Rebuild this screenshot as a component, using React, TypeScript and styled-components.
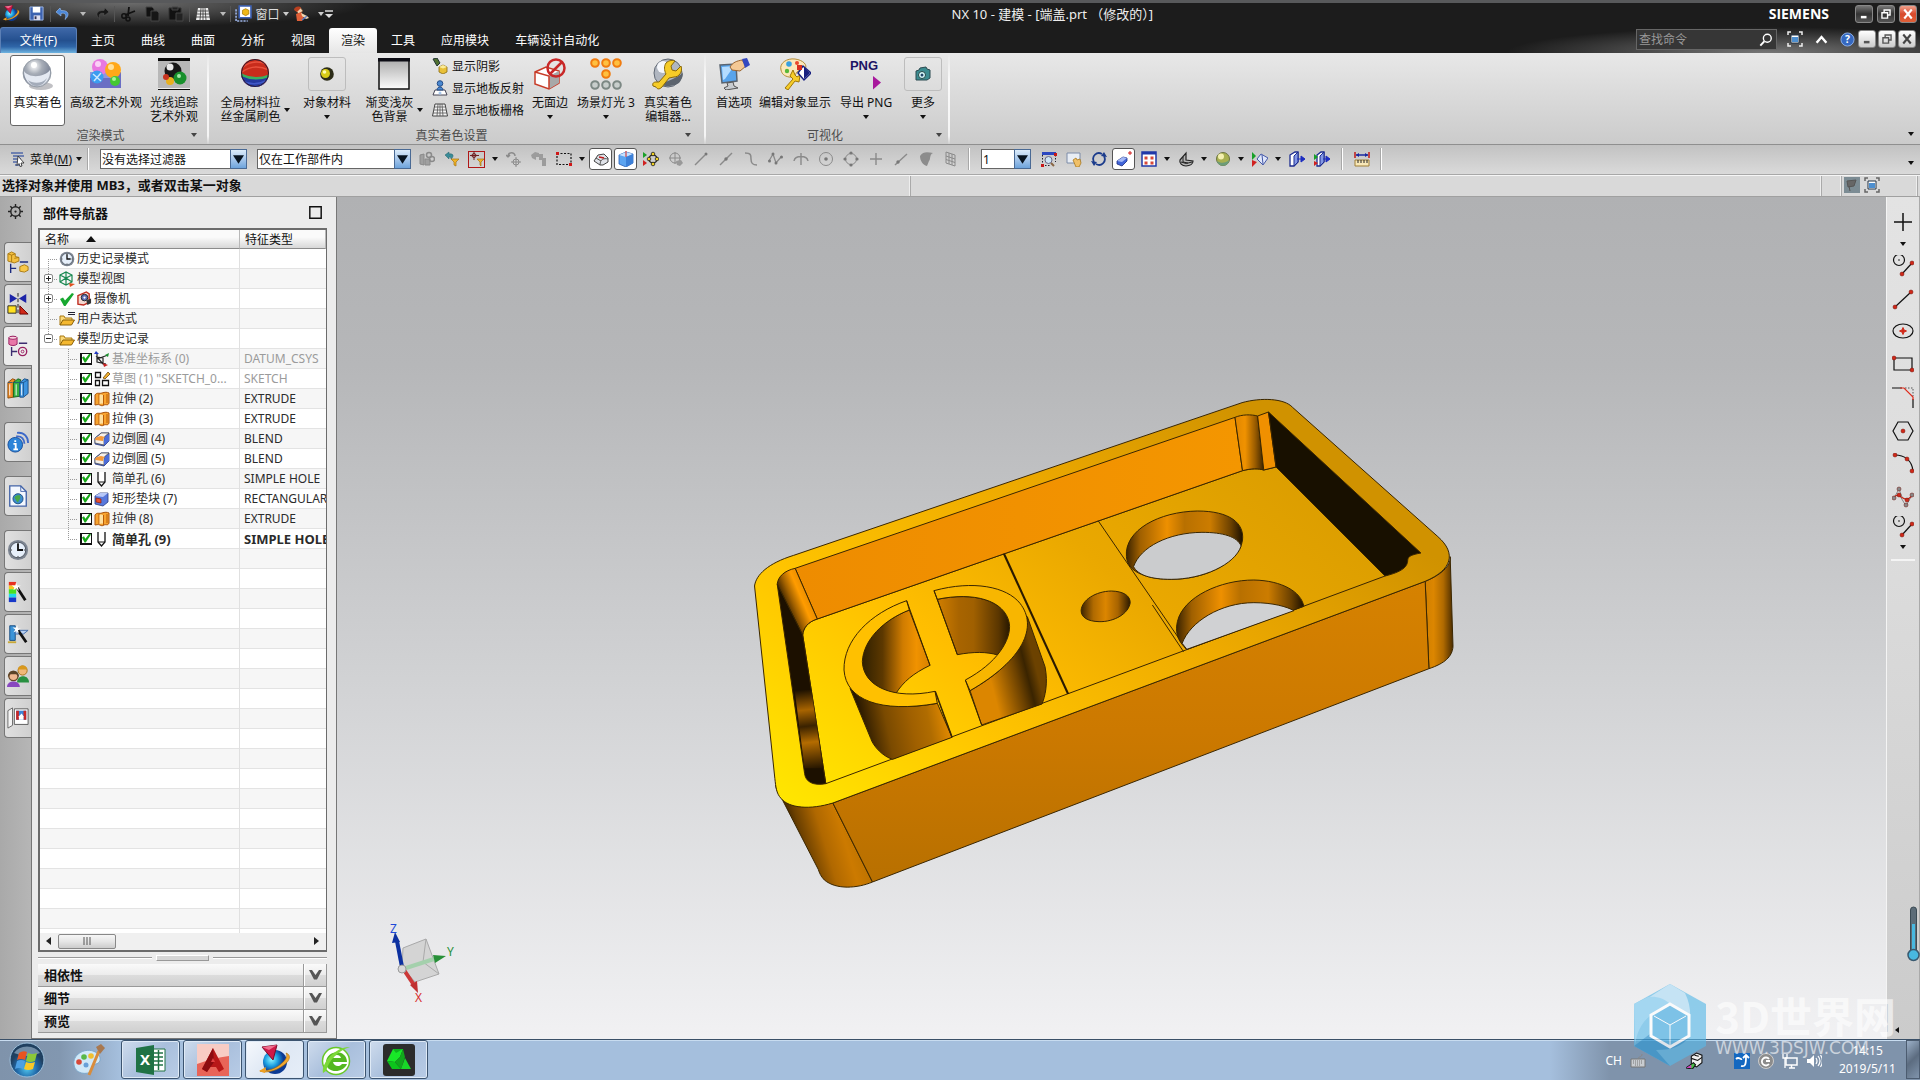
import React from "react";
import styled, { createGlobalStyle, css } from "styled-components";

const GlobalStyle = createGlobalStyle`
  *, *::before, *::after { box-sizing: border-box; }
  body { margin: 0; }
  body, button, input, select, table {
    font-family: "Noto Sans", "Noto Sans CJK SC", sans-serif;
    font-size: 12px;
  }
  button { padding: 0; border: 0; background: none; color: inherit; }
  svg { display: block; flex: none; }
`;

const Page = styled.div`
  position: relative;
  display: flex;
  flex-direction: column;
  height: 100vh;
  min-height: 800px;
  overflow: hidden;
  color: #111;
`;

/* ---------- shared ---------- */

type IconProps = { w?: number; h?: number; vb?: string; children: React.ReactNode };
const Icon = ({ w = 16, h = w, vb = "0 0 16 16", children }: IconProps) => (
  <svg width={w} height={h} viewBox={vb} aria-hidden="true" fill="none">
    {children}
  </svg>
);
const Caret = ({ color = "#111" }: { color?: string }) => (
  <svg width="6" height="4" viewBox="0 0 6 4" aria-hidden="true">
    <path d="M0 0h6L3 4z" fill={color} />
  </svg>
);

/* ---------- header ---------- */

const Header = styled.header`
  flex: none;
  border-top: 3px solid #58595b;
  background:
    radial-gradient(ellipse 260px 26px at 92% 100%, #777 0%, rgba(119, 119, 119, 0) 100%),
    radial-gradient(ellipse 240px 24px at 130px 0, #6b6b6b 0%, rgba(107, 107, 107, 0) 100%),
    #1c1c1c;
  color: #eee;
`;
const TitleRow = styled.div`
  display: flex;
  align-items: center;
  height: 21px;
  padding-right: 3px;
`;
const QuickBar = styled.div`
  display: flex;
  align-items: center;
  width: 336px;
`;
const QuickButton = styled.button<{ $w: number }>`
  display: flex;
  align-items: center;
  justify-content: center;
  gap: 3px;
  width: ${(p) => p.$w}px;
  height: 20px;
  color: #ddd;
`;
const QuickRule = styled.span`
  width: 1px;
  height: 16px;
  background: #555;
`;
const WindowTitle = styled.h1`
  flex: 1;
  margin: 0;
  font-size: 13px;
  font-weight: 400;
  line-height: 20px;
  text-align: center;
`;
const Brand = styled.span`
  font: bold 14px/20px "Open Sans", sans-serif;
  color: #fff;
  margin-right: 26px;
`;
const WindowButtons = styled.div`
  display: flex;
  align-items: center;
  gap: 4px;
`;
const WindowButton = styled.button<{ $tone: "dark" | "red" | "light" }>`
  display: flex;
  align-items: center;
  justify-content: center;
  width: 18px;
  height: 18px;
  border: 1px solid #888;
  border-radius: 3px;
  background: ${(p) =>
    p.$tone === "red"
      ? "linear-gradient(#f0a08c, #d84a2c 50%, #e06038)"
      : p.$tone === "light"
        ? "linear-gradient(#fff, #ccc)"
        : "linear-gradient(#777, #333 50%, #555)"};
`;
const TabRow = styled.div`
  display: flex;
  align-items: flex-end;
  height: 29px;
  padding-right: 4px;
`;
const FileTab = styled.button`
  width: 77px;
  height: 26px;
  padding-bottom: 2px;
  border-radius: 3px 3px 0 0;
  background: linear-gradient(#3f68a8, #24508f 50%, #2f66a8 75%, #6fb4e0);
  border: 1px solid #5b7fb5;
  border-bottom: 0;
  color: #fff;
  margin-right: 1px;
`;
const Tab = styled.button<{ $active?: boolean }>`
  height: 25px;
  padding: 0 12px 2px;
  margin: 0 1px;
  border-radius: 3px 3px 0 0;
  color: #fff;
  ${(p) =>
    p.$active &&
    css`
      background: linear-gradient(#fff, #e6e6e6);
      color: #111;
    `}
`;
const Grow = styled.span`
  flex: 1;
`;
const SearchBox = styled.label`
  display: flex;
  align-items: center;
  width: 141px;
  height: 21px;
  margin: 0 9px 3px 0;
  padding-right: 3px;
  border: 1px solid #666;
  background: #363636;
`;
const SearchInput = styled.input`
  flex: 1;
  min-width: 0;
  padding: 0 2px;
  border: 0;
  outline: 0;
  background: none;
  color: #aaa;
  &::placeholder { color: #999; opacity: 1; }
`;
const HeaderTools = styled.div`
  display: flex;
  align-items: center;
  height: 24px;
  gap: 2px;
  margin-bottom: 2px;
`;

const Restore = ({ c }: { c: string }) => (
  <Icon w={10}>
    <path d="M5 5V1.500h9.500v8H11M1.500 6h9v8.500h-9z" stroke={c} strokeWidth="2.200" />
  </Icon>
);
const Minimize = ({ c }: { c: string }) => (
  <Icon w={10}><path d="M3 13h9" stroke={c} strokeWidth="4" /></Icon>
);
const Close = ({ c }: { c: string }) => (
  <Icon w={12}><path d="M3 2l10 12M13 2L3 14" stroke={c} strokeWidth="2.800" /></Icon>
);
const FullScreen = ({ w = 16, c = "#eee" }: { w?: number; c?: string }) => (
  <Icon w={w}>
    <path d="M1 4V1h3M12 1h3v3M15 12v3h-3M4 15H1v-3" stroke={c} strokeWidth="1.500" />
    <path d="M4 4h8v8H4z" fill="#fff" stroke="#234" />
    <path d="M5 6h6v5H5z" fill="#4d8fd0" />
  </Icon>
);
const NxLogo = ({ w = 17 }: { w?: number }) => (
  <Icon w={w} vb="0 0 32 32">
    <defs>
      <radialGradient id="nxBall" cx=".35" cy=".4"><stop offset="0" stopColor="#8ff4ff" /><stop offset=".55" stopColor="#1b9ee0" /><stop offset="1" stopColor="#0b3a94" /></radialGradient>
    </defs>
    <circle cx="16" cy="18" r="12" fill="url(#nxBall)" />
    <path d="M27 9c6 2 4 9-5 14-8 5-17 6-21 4 8 0 15-2 21-7 5-4 7-8 5-11z" fill="#f0a830" stroke="#a86a08" strokeWidth=".6" />
    <path d="M0 27l7-4-1 6z" fill="#f0a020" />
    <path d="M3 3l15-2-4 15z" fill="#d01848" stroke="#7b0a28" />
    <path d="M3 3l15-2-8 5z" fill="#f07090" />
  </Icon>
);

const TitleBar = () => (
  <TitleRow>
    <QuickBar>
      <QuickButton $w={23} aria-label="NX"><NxLogo /></QuickButton>
      <QuickButton $w={27} aria-label="保存">
        <Icon w={15}>
          <path d="M1 1h14v14H1z" fill="#3c62b0" stroke="#9db6e4" />
          <path d="M4 1h8v6H4z" fill="#fff" /><path d="M5 10h7v5H5z" fill="#dde" /><path d="M6 11h2v3H6z" fill="#335" />
        </Icon>
      </QuickButton>
      <QuickRule />
      <QuickButton $w={38} aria-label="撤消">
        <Icon><path d="M5 2L1 6l5 4V7.500c4-1 6 1 4 6 5-4 4-9.500-4-9z" fill="#4b87d8" stroke="#9cc0f0" strokeWidth=".6" /></Icon>
        <Icon w={3}><g /></Icon>
        <Caret color="#bbb" />
      </QuickButton>
      <QuickButton $w={25} aria-label="重做">
        <Icon><path d="M11 2l4 4-5 4V7.500c-4-1-6 1-4 6-5-4-4-9.500 4-9z" fill="#181818" stroke="#555" strokeWidth=".6" /></Icon>
      </QuickButton>
      <QuickRule />
      <QuickButton $w={26} aria-label="剪切">
        <Icon><path d="M15 5L5 9M9 1l-1 9" stroke="#111" strokeWidth="1.800" /><circle cx="4" cy="10" r="2.200" stroke="#111" strokeWidth="1.500" /><circle cx="8" cy="13" r="2" stroke="#111" strokeWidth="1.500" /></Icon>
      </QuickButton>
      <QuickButton $w={22} aria-label="复制">
        <Icon><path d="M2 1h6l2 2v8H2z" fill="#111" stroke="#444" /><path d="M7 5h6l2 2v8H7z" fill="#161616" stroke="#444" /></Icon>
      </QuickButton>
      <QuickButton $w={26} aria-label="粘贴">
        <Icon><path d="M1 2h12v12H1z" fill="#111" stroke="#333" /><path d="M4 1h6v3H4zM8 7h7v8H8z" fill="#222" stroke="#444" /></Icon>
      </QuickButton>
      <QuickRule />
      <QuickButton $w={40} aria-label="栅格">
        <Icon><path d="M3 2h10l2 12H1z" fill="#eee" /><path d="M2.500 5h11M2 8h12M1 11h14M6 2l-1 12M8 2v12M10 2l1 12" stroke="#333" strokeWidth=".8" /></Icon>
        <Icon w={3}><g /></Icon>
        <Caret color="#bbb" />
      </QuickButton>
      <QuickRule />
      <QuickButton $w={62}>
        <Icon w={17}>
          <path d="M4 1h11v11H4z" fill="#fff" stroke="#3d62b8" strokeWidth="1.500" />
          <path d="M1 4v11h11" stroke="#9cb4e8" strokeWidth="1.500" strokeDasharray="2 1" />
          <path d="M7 5l3-1.500L13 5v3.500L10 10 7 8.500z" fill="#f0b818" stroke="#a87800" strokeWidth=".7" />
        </Icon>
        窗口
        <Caret color="#ccc" />
      </QuickButton>
      <QuickButton $w={30} aria-label="角色">
        <Icon><path d="M2 4l5-3 3 4-4 3z" fill="#f0d0b0" stroke="#704018" strokeWidth=".6" /><path d="M1 4c0-3 5-5 7-2L4 6z" fill="#b84020" /><path d="M3 8l5-2 3 4-2 5H4z" fill="#e06038" /><path d="M8 7l6 3 2 2-3 1-4-3z" fill="#f0d8b0" /><path d="M9 14l5-4" stroke="#6080c8" strokeWidth="1.500" /></Icon>
        <Icon w={3}><g /></Icon>
        <Caret color="#ccc" />
      </QuickButton>
      <QuickButton $w={12} aria-label="自定义">
        <Icon w={8} vb="0 0 8 8"><path d="M0 1h8" stroke="#ddd" strokeWidth="1.500" /><path d="M0 4h8L4 8z" fill="#ddd" /></Icon>
      </QuickButton>
    </QuickBar>
    <WindowTitle>NX 10 - 建模 - [端盖.prt （修改的）]</WindowTitle>
    <Brand>SIEMENS</Brand>
    <WindowButtons>
      <WindowButton $tone="dark" aria-label="最小化"><Minimize c="#fff" /></WindowButton>
      <WindowButton $tone="dark" aria-label="还原"><Restore c="#fff" /></WindowButton>
      <WindowButton $tone="red" aria-label="关闭"><Close c="#fff" /></WindowButton>
    </WindowButtons>
  </TitleRow>
);

const TABS = ["主页", "曲线", "曲面", "分析", "视图", "渲染", "工具", "应用模块", "车辆设计自动化"];

const MenuTabs = () => (
  <TabRow>
    <FileTab>文件(F)</FileTab>
    {TABS.map((t) => (
      <Tab key={t} $active={t === "渲染"}>{t}</Tab>
    ))}
    <Grow />
    <SearchBox>
      <SearchInput placeholder="查找命令" aria-label="查找命令" />
      <Icon w={14}><circle cx="9.500" cy="6" r="4.500" stroke="#fff" strokeWidth="1.600" /><path d="M6 9.500L1.500 14.500" stroke="#fff" strokeWidth="2.200" /></Icon>
    </SearchBox>
    <HeaderTools>
      <QuickButton $w={18} aria-label="全屏"><FullScreen /></QuickButton>
      <QuickButton $w={30} aria-label="最小化功能区">
        <Icon w={13}><path d="M2 12l6-7 6 7" stroke="#fff" strokeWidth="3" /></Icon>
      </QuickButton>
      <QuickButton $w={18} aria-label="帮助">
        <Icon w={15}>
          <circle cx="8" cy="8" r="7" fill="#3568c0" stroke="#8fb0e8" />
          <text x="8" y="12" fontSize="11" fontWeight="700" fill="#fff" textAnchor="middle">?</text>
        </Icon>
      </QuickButton>
      <WindowButton $tone="light" aria-label="最小化窗口"><Minimize c="#555" /></WindowButton>
      <WindowButton $tone="light" aria-label="还原窗口"><Restore c="#555" /></WindowButton>
      <WindowButton $tone="light" aria-label="关闭窗口"><Close c="#444" /></WindowButton>
    </HeaderTools>
  </TabRow>
);

/* ---------- ribbon ---------- */

const Ribbon = styled.section`
  flex: none;
  display: flex;
  height: 92px;
  padding-top: 2px;
  background: linear-gradient(#e8e8e8, #dcdcdc 40%, #cbcbcb);
  border-bottom: 1px solid #8f8f8f;
`;
const RibbonGroup = styled.div<{ $left: number; $right: number }>`
  display: flex;
  flex-direction: column;
  padding-left: ${(p) => p.$left}px;
  padding-right: ${(p) => p.$right}px;
  border-right: 2px solid;
  border-image: linear-gradient(#e8e8e8, #fafafa 30%, #f4f4f4 90%, #cbcbcb) 1;
`;
const RibbonItems = styled.div`
  display: flex;
  gap: 4px;
  height: 71px;
`;
const GroupCaption = styled.div`
  display: flex;
  align-items: center;
  height: 19px;
  padding-right: 4px;
  color: #4c4c4c;
  span { flex: 1; text-align: center; }
`;
const BigButton = styled.button<{ $w: number; $active?: boolean }>`
  display: flex;
  flex-direction: column;
  align-items: center;
  width: ${(p) => p.$w}px;
  height: 71px;
  padding-top: 1px;
  border: 1px solid ${(p) => (p.$active ? "#666" : "transparent")};
  border-radius: 3px;
  background: ${(p) => (p.$active ? "#fff" : "none")};
  white-space: nowrap;
`;
const IconSlot = styled.span<{ $framed?: boolean }>`
  display: flex;
  align-items: center;
  justify-content: center;
  width: 38px;
  height: 34px;
  margin-bottom: 5px;
  border: 1px solid ${(p) => (p.$framed ? "#bdbdbd" : "transparent")};
  border-radius: 3px;
`;
const LabelRow = styled.span`
  display: flex;
  align-items: center;
  justify-content: center;
  gap: 3px;
  line-height: 14px;
`;
const CaretLine = styled.span`
  display: flex;
  align-items: center;
  height: 14px;
`;
const SmallList = styled.div`
  display: flex;
  flex-direction: column;
  width: 95px;
`;
const SmallButton = styled.button`
  display: flex;
  align-items: center;
  gap: 4px;
  height: 22px;
  padding-left: 2px;
  padding-bottom: 1px;
  white-space: nowrap;
`;

type BigProps = {
  w: number; icon: React.ReactNode; lines: string[]; active?: boolean;
  framed?: boolean; menu?: "side" | "below";
};
const Big = ({ w, icon, lines, active, framed, menu }: BigProps) => (
  <BigButton $w={w} $active={active}>
    <IconSlot $framed={framed}>{icon}</IconSlot>
    <LabelRow>
      <span>{lines.map((l) => <div key={l}>{l}</div>)}</span>
      {menu === "side" && <Caret />}
    </LabelRow>
    {menu === "below" && <CaretLine><Caret /></CaretLine>}
  </BigButton>
);

const V32 = "0 0 32 32";
const IconShading = () => (
  <Icon w={32} vb={V32}>
    <defs>
      <radialGradient id="chrome" cx=".4" cy=".25" r=".8"><stop offset="0" stopColor="#fff" /><stop offset=".35" stopColor="#a8aeb8" /><stop offset=".7" stopColor="#80889a" /><stop offset="1" stopColor="#c8ccd4" /></radialGradient>
    </defs>
    <ellipse cx="19" cy="28" rx="12" ry="4" fill="#c0c0c4" />
    <circle cx="15" cy="15" r="14" fill="url(#chrome)" stroke="#8c949e" strokeWidth=".8" />
    <path d="M2 13c4 7 20 7 26-1 1 8-5 16-13 16S2 21 2 13z" fill="#e4e9f2" />
    <path d="M6 22c5 4 14 4 19-2-2 5-6 8-10 8s-7-2-9-6z" fill="#a4acba" />
    <circle cx="12" cy="7" r="3" fill="#fff" />
  </Icon>
);
const IconArt = () => (
  <Icon w={32} vb={V32}>
    <path d="M0 14h31v16H0z" fill="#6a6ec4" /><path d="M0 14h31l-8 6H0z" fill="#9296dc" />
    <circle cx="10" cy="9" r="8" fill="#e878e0" /><circle cx="8" cy="6" r="3" fill="#fbd0f6" />
    <circle cx="23" cy="12" r="8" fill="#ffa818" /><circle cx="21" cy="9" r="3" fill="#ffe09a" />
    <circle cx="7" cy="19" r="6.500" fill="#3c9cf0" /><path d="M3 16l8 7M11 15l-7 8" stroke="#cbe8ff" strokeWidth="1.500" />
    <circle cx="25" cy="23" r="5" fill="#44c832" /><circle cx="24" cy="21" r="2" fill="#a8f29a" />
  </Icon>
);
const IconRay = () => (
  <Icon w={32} vb={V32}>
    <path d="M0 0h32v32H0z" fill="#b8b8b8" /><path d="M0 0h32v3H0zM0 31h32v1H0z" fill="#0a0a0a" /><path d="M0 30h32v1H0z" fill="#eee" />
    <circle cx="15" cy="13" r="8.500" fill="#181818" /><circle cx="12" cy="9" r="3.500" fill="#e8e8e8" />
    <circle cx="22" cy="20" r="6.500" fill="#18902c" /><circle cx="21" cy="18" r="2" fill="#a2e8a8" />
    <circle cx="12" cy="23" r="4" fill="#e8b020" /><circle cx="8" cy="19" r="3" fill="#c83420" />
  </Icon>
);
const IconMaterial = () => (
  <Icon w={32} vb={V32}>
    <defs><clipPath id="matBall"><circle cx="16" cy="15" r="14" /></clipPath></defs>
    <g clipPath="url(#matBall)">
      <path d="M0 0h32v32H0z" fill="#c82c1c" />
      <path d="M0 16q16 8 32 1v16H0z" fill="#2438a0" /><path d="M1 16q15 8 31 1" stroke="#3bb060" strokeWidth="2.500" />
      <path d="M4 9q10-8 24-3M3 14q12-9 27-2" stroke="#e8503c" strokeWidth="1.500" /><path d="M3 23q12 6 26-1M8 28q10 2 17-2" stroke="#4058c8" strokeWidth="1.500" />
    </g>
    <circle cx="16" cy="15" r="13.500" stroke="#2a1c30" />
  </Icon>
);
const IconObject = () => (
  <Icon w={16}>
    <circle cx="8" cy="8" r="6.800" fill="#2c2c18" />
    <circle cx="6.500" cy="7.500" r="4.500" fill="#d8cc18" /><circle cx="5.500" cy="6" r="1.800" fill="#fffcb0" />
  </Icon>
);
const IconBackground = () => (
  <Icon w={32} vb={V32}>
    <defs><linearGradient id="bgFade" x1="0" y1="0" x2="0" y2="1"><stop offset="0" stopColor="#aaa" /><stop offset="1" stopColor="#fcfcfc" /></linearGradient></defs>
    <path d="M1 1h30v30H1z" fill="url(#bgFade)" stroke="#111" strokeWidth="1.500" /><path d="M0 0h32v3.500H0z" fill="#0c0c14" />
  </Icon>
);
const IconNoEdge = () => (
  <Icon w={32} vb={V32}>
    <path d="M1 14l11-5 13 4v12l-10 6-14-5z" fill="#fff" stroke="#c83c28" strokeWidth="1.500" />
    <path d="M15 18l10-5v12l-10 6z" fill="#a8a8a8" /><path d="M1 14l14 4v13" stroke="#c83c28" strokeWidth="1.500" />
    <circle cx="22" cy="10" r="8.500" stroke="#c82828" strokeWidth="2.500" /><path d="M16 16L28 4" stroke="#c82828" strokeWidth="2.500" />
  </Icon>
);
const IconLights = () => (
  <Icon w={32} vb={V32}>
    {[5, 16, 27].map((x) => <circle key={x} cx={x} cy="5" r="3.800" fill="#ffc040" stroke="#f07c10" strokeWidth="2" />)}
    <circle cx="16" cy="16" r="3.800" fill="#ffc040" stroke="#f07c10" strokeWidth="2" />
    {[5, 16, 27].map((x) => <circle key={x} cx={x} cy="27" r="3.800" fill="#c8cecc" stroke="#7c8884" strokeWidth="2" />)}
  </Icon>
);
const IconEditor = () => (
  <Icon w={32} vb={V32}>
    <circle cx="16" cy="15" r="14" fill="#b0b6c0" stroke="#606874" /><circle cx="11" cy="9" r="6" fill="#f6f8fc" />
    <path d="M8 26q9 5 19-1 4-5 4-10-8 6-23 11z" fill="#5c646e" />
    <path d="M14 5c3-3 7-3 9-2l-4 5 1 4 4 1 5-5c2 6-2 11-7 11l-5 1-7 9c-3 3-5 2-6 0l-3-1c-1-3 1-4 3-4h3l7-8c-2-4-2-8 0-11z" fill="#f6cc28" stroke="#8c6a08" />
  </Icon>
);
const IconPrefs = () => (
  <Icon w={32} vb={V32}>
    <path d="M2 7l16-1 1 17-15 2z" fill="#58a4ec" stroke="#5a6470" strokeWidth="1.500" /><path d="M4 9l12-1-9 13-2 1z" fill="#b4dcff" />
    <path d="M9 25l6-1 1 4 4 2-12 2-2-2 4-2z" fill="#c8ccd0" stroke="#555" />
    <path d="M12 9c3-5 7-6 12-7l4 6-6 5-8-1z" fill="#f4c894" stroke="#9a6430" /><path d="M24 1l5-1 3 7-5 3z" fill="#3448c0" />
  </Icon>
);
const IconEditDisplay = () => (
  <Icon w={32} vb={V32}>
    <path d="M2 12C0 5 8 0 16 1s13 6 10 10c-3 3-6 0-8 3s-3 6-8 5-7-3-8-7z" fill="#fbe8ba" stroke="#b48c38" />
    <circle cx="10" cy="6" r="2.800" fill="#38a0e0" /><circle cx="18" cy="5" r="2" fill="#e84a2c" /><circle cx="8" cy="13" r="2.200" fill="#58b838" />
    <path d="M14 12l-3 6 3 3-8 9 3 2 7-9 4 1 1-7-3 2-2-2z" fill="#f6cc28" stroke="#a07808" />
    <path d="M19 15l5-7 8 7-7 7z" fill="#fff" stroke="#182080" strokeWidth="1.500" /><path d="M25 9l6 6-6 6z" fill="#182080" /><path d="M18 7h5v5h-5z" fill="#d83020" />
  </Icon>
);
const IconPng = () => (
  <Icon w={32} vb={V32}>
    <text x="14" y="12" fontSize="13" fontWeight="700" fill="#1c1464" textAnchor="middle" fontFamily="Liberation Sans">PNG</text>
    <path d="M23 18l8 6.500-8 7z" fill="#a8189c" />
  </Icon>
);
const IconCamera = () => (
  <Icon w={16}>
    <path d="M1 5l3-1 1-2 6-1 1 2 3 1v8l-3 2H1z" fill="#3c8c90" stroke="#2a4a50" /><circle cx="7" cy="9" r="3.500" fill="#dff" stroke="#244" /><circle cx="7" cy="9" r="1.500" fill="#246" />
  </Icon>
);

const RibbonBar = () => (
  <Ribbon>
    <RibbonGroup $left={10} $right={6}>
      <RibbonItems>
        <Big w={55} active icon={<IconShading />} lines={["真实着色"]} />
        <Big w={74} icon={<IconArt />} lines={["高级艺术外观"]} />
        <Big w={54} icon={<IconRay />} lines={["光线追踪", "艺术外观"]} />
      </RibbonItems>
      <GroupCaption><span>渲染模式</span><Caret color="#444" /></GroupCaption>
    </RibbonGroup>
    <RibbonGroup $left={9} $right={9}>
      <RibbonItems>
        <Big w={74} menu="side" icon={<IconMaterial />} lines={["全局材料拉", "丝金属刷色"]} />
        <Big w={62} menu="below" framed icon={<IconObject />} lines={["对象材料"]} />
        <Big w={64} menu="side" icon={<IconBackground />} lines={["渐变浅灰", "色背景"]} />
        <SmallList>
          <SmallButton>
            <Icon><path d="M1 1l4-1 3 5-3 3z" fill="#507030" stroke="#233" /><path d="M7 9l4-2 4 2v5l-4 2-4-2z" fill="#e8c038" stroke="#8a6a10" strokeWidth=".8" /><path d="M7 9l4 1.500L15 9l-4-2z" fill="#fbeb98" /></Icon>
            显示阴影
          </SmallButton>
          <SmallButton>
            <Icon><path d="M3 10h10l2 5H1z" fill="#fff" stroke="#445" /><circle cx="8" cy="3.500" r="2.800" fill="#4a88d0" stroke="#234c88" /><path d="M5 10c0-4 6-4 6 0z" fill="#4a88d0" stroke="#234c88" /><circle cx="8" cy="13" r="1.500" fill="#a8c8ec" /></Icon>
            显示地板反射
          </SmallButton>
          <SmallButton>
            <Icon><path d="M3 2h10l2.500 12H.5z" fill="#f4f4f4" stroke="#444" /><path d="M2.500 5h11M2 8h12M1 11h14M6 2l-1 12M8 2v12M10 2l1 12" stroke="#555" strokeWidth=".8" /></Icon>
            显示地板栅格
          </SmallButton>
        </SmallList>
        <Big w={42} menu="below" icon={<IconNoEdge />} lines={["无面边"]} />
        <Big w={62} menu="below" icon={<IconLights />} lines={["场景灯光 3"]} />
        <Big w={54} icon={<IconEditor />} lines={["真实着色", "编辑器..."]} />
      </RibbonItems>
      <GroupCaption><span>真实着色设置</span><Caret color="#444" /></GroupCaption>
    </RibbonGroup>
    <RibbonGroup $left={8} $right={2}>
      <RibbonItems>
        <Big w={40} icon={<IconPrefs />} lines={["首选项"]} />
        <Big w={74} icon={<IconEditDisplay />} lines={["编辑对象显示"]} />
        <Big w={60} menu="below" icon={<IconPng />} lines={["导出 PNG"]} />
        <Big w={46} menu="below" framed icon={<IconCamera />} lines={["更多"]} />
      </RibbonItems>
      <GroupCaption><span>可视化</span><Caret color="#444" /></GroupCaption>
    </RibbonGroup>
    <Grow />
    <EndCaret><Caret /></EndCaret>
  </Ribbon>
);

const EndCaret = styled.span`
  display: flex;
  align-self: flex-end;
  padding: 0 6px 8px 0;
`;

/* ---------- selection bar ---------- */

const SelectionBar = styled.div`
  flex: none;
  display: flex;
  align-items: center;
  height: 30px;
  padding-bottom: 1px;
  background: linear-gradient(#c2c2c2, #dadada);
  border-bottom: 1px solid #a8a8a8;
`;
const MenuButton = styled.button`
  display: flex;
  align-items: center;
  gap: 4px;
  height: 22px;
  width: 87px;
  padding-left: 10px;
`;
const BarRule = styled.span<{ $before: number; $after: number }>`
  width: 2px;
  height: 22px;
  margin-left: ${(p) => p.$before}px;
  margin-right: ${(p) => p.$after}px;
  background: linear-gradient(90deg, #a8a8a8 50%, #fff 50%);
`;
const SelectWrap = styled.span<{ $w: number; $gap: number }>`
  display: grid;
  width: ${(p) => p.$w}px;
  height: 20px;
  margin-right: ${(p) => p.$gap}px;
`;
const Select = styled.select`
  grid-area: 1 / 1;
  appearance: none;
  width: 100%;
  height: 20px;
  padding: 0 20px 0 1px;
  border: 1px solid #666;
  border-radius: 0;
  background: #fff;
  color: #111;
`;
const SelectArrow = styled.span`
  grid-area: 1 / 1;
  justify-self: end;
  display: flex;
  align-items: center;
  justify-content: center;
  width: 17px;
  height: 20px;
  border: 1px solid #4a6a94;
  background: linear-gradient(#dcecfa, #a8c8ec 50%, #6ea4dc);
  pointer-events: none;
`;
const Tool = styled.button<{ $on?: boolean; $mark?: boolean }>`
  display: flex;
  align-items: center;
  justify-content: center;
  width: ${(p) => (p.$mark ? 17 : 23)}px;
  height: ${(p) => (p.$mark ? 17 : 22)}px;
  margin: 0 ${(p) => (p.$mark ? 4 : 1)}px;
  border: 1px solid ${(p) => (p.$on ? "#555" : p.$mark ? "#b01818" : "transparent")};
  border-radius: ${(p) => (p.$on ? 3 : 0)}px;
  background: ${(p) => (p.$on ? "#fff" : "none")};
`;
const ToolMenu = styled.button`
  display: flex;
  align-items: center;
  justify-content: center;
  width: 12px;
  height: 22px;
`;

const Dropdown = ({ label, value, w, gap }: { label: string; value: string; w: number; gap: number }) => (
  <SelectWrap $w={w} $gap={gap}>
    <Select aria-label={label} defaultValue={value}><option>{value}</option></Select>
    <SelectArrow><Icon w={11} vb="0 0 9 9"><path d="M0 1h9L4.500 8z" fill="#081420" /></Icon></SelectArrow>
  </SelectWrap>
);

const G = "#8a8a8a";
type ToolSpec = { n: string; d: React.ReactNode; on?: boolean; mark?: boolean; menu?: boolean };
const SNAP_TOOLS: ToolSpec[] = [
  { n: "装配选择", d: <><path d="M1 4l4-1v11l-4-1zM6 8h5v6H6z" fill="#a0a0a0" stroke={G} /><circle cx="10" cy="4" r="2.500" stroke={G} strokeWidth="1.500" /><circle cx="13" cy="8" r="2.500" stroke={G} strokeWidth="1.500" /></> },
  { n: "重置过滤器", d: <><path d="M1 4l4-3v2c5-1 5 3 2 5 0-2-1-2-2-2v2z" fill="#3a8c98" stroke="#206068" strokeWidth=".5" /><path d="M7 8h8l-3 3v4l-2-1v-3z" fill="#f0b428" stroke="#a87410" strokeWidth=".7" /></> },
  { n: "类型过滤器", mark: true, menu: true, d: <><path d="M5 0v9M1 4.500h9" stroke="#702020" /><circle cx="5" cy="4.500" r="2" stroke="#702020" /><path d="M8 8h7l-3 3v4l-1-1v-3z" fill="#f0b428" stroke="#a87410" strokeWidth=".7" /></> },
  { n: "全不选", d: <><path d="M2 6c0-6 7-5 7-1M2 6L0 4M2 6l2-2" stroke={G} strokeWidth="1.500" /><circle cx="10" cy="11" r="3" stroke={G} /><path d="M10 6v10M5 11h10" stroke={G} /></> },
  { n: "选择优先级", d: <path d="M0 4l4-3 4 1v1h4v4h3v8h-4v-6H8V6H5v3L1 7z" fill="#9c9c9c" /> },
  { n: "矩形选择", menu: true, d: <><path d="M1 2.500h14v11H1z" stroke="#111" strokeWidth="1.200" strokeDasharray="2 1.500" /><path d="M0 1h3v3H0zM13 12h3v3h-3z" fill="#d01818" /></> },
  { n: "高亮隐藏边", on: true, d: <><path d="M1 10l4-6 6-1 4 4v4l-5 3H7z" fill="#dfe2e8" stroke="#444" /><path d="M7 14c0-6 4-7 8-6M3 7l5 3" stroke="#555" /><path d="M6 6l5 1" stroke="#c01818" strokeWidth="1.500" /></> },
  { n: "实体", on: true, d: <><path d="M1 4l7-3 7 2v9l-7 4-7-3z" fill="#5ca4f0" stroke="#2a60b8" strokeWidth=".8" /><path d="M1 4l7 2 7-3-7-2z" fill="#c4e0ff" /><path d="M8 6v10l7-4V3z" fill="#3c80d8" /><path d="M8 0v6" stroke="#d02020" /></> },
  { n: "捕捉点", d: <><path d="M0 1l4 3-4 3z" fill="#18a028" /><path d="M0 9l4 3-4 3z" fill="#d02020" /><circle cx="10" cy="8" r="4" stroke="#222" strokeWidth="1.500" /><circle cx="10" cy="3" r="1.800" fill="#f0d020" stroke="#222" strokeWidth=".8" /><circle cx="6" cy="8" r="1.800" fill="#f0d020" stroke="#222" strokeWidth=".8" /><circle cx="14" cy="8" r="1.800" fill="#f0d020" stroke="#222" strokeWidth=".8" /><circle cx="10" cy="13" r="1.800" fill="#f0d020" stroke="#222" strokeWidth=".8" /></> },
  { n: "捕捉视图", d: <><circle cx="7" cy="7" r="5" stroke={G} /><path d="M7 1v12M1 7h12" stroke={G} /><path d="M8 10l5-1 2 3-3 3-3-1z" fill="#999" /></> },
  { n: "端点", d: <><path d="M2 14L12 4" stroke={G} strokeWidth="1.400" /><circle cx="13" cy="3" r="1.500" fill="#777" /></> },
  { n: "中点", d: <><path d="M2 14L14 2" stroke={G} strokeWidth="1.400" /><circle cx="8" cy="8" r="1.700" fill="#777" /></> },
  { n: "控制点", d: <path d="M2 2c6 0 6 2 6 6s1 6 6 6" stroke={G} strokeWidth="1.500" /> },
  { n: "极点", d: <><path d="M1 10l4-7 3 9 5-6" stroke={G} strokeWidth="1.300" /><circle cx="1.500" cy="10" r="1.500" fill="#777" /><circle cx="5" cy="3" r="1.500" fill="#777" /><circle cx="8" cy="12" r="1.500" fill="#777" /><circle cx="13.500" cy="6" r="1.500" fill="#777" /></> },
  { n: "交点", d: <path d="M1 10c1-6 13-6 14 0M8 2v12" stroke={G} strokeWidth="1.400" /> },
  { n: "圆心", d: <><circle cx="8" cy="8" r="6.500" stroke={G} /><circle cx="8" cy="8" r="1.800" fill="#777" /></> },
  { n: "象限点", d: <><circle cx="8" cy="8" r="5.500" stroke={G} />{[[8, 2], [8, 14], [2, 8], [14, 8]].map(([x, y]) => <circle key={`${x}${y}`} cx={x} cy={y} r="1.600" fill="#777" />)}</> },
  { n: "现有点", d: <path d="M8 2v12M2 8h12" stroke={G} strokeWidth="1.400" /> },
  { n: "曲线上的点", d: <><path d="M2 14L14 3" stroke={G} strokeWidth="1.400" /><circle cx="5" cy="11" r="1.700" fill="#777" /></> },
  { n: "面上的点", d: <path d="M2 5c3-5 8-4 13-3-4 2-2 6-4 8l-2 5c-4-1-7-5-7-10z" fill="#8c8c8c" /> },
  { n: "有界栅格", d: <path d="M3 1l9 3v11l-9-3zM3 5l9 3M3 8.500l9 3M6 2v11M9 3v11" stroke={G} /> },
];
const VIEW_TOOLS: ToolSpec[] = [
  { n: "缩放", d: <><path d="M1 1h14v3H1z" fill="#2c48c0" /><path d="M1.500 4v11M14.500 4v7M1 14.500h8" stroke="#223" strokeDasharray="1.500 1.500" /><circle cx="7.500" cy="9" r="3.500" fill="#cfe6f4" stroke="#668" /><path d="M10 12l3 3" stroke="#864" strokeWidth="2" /><path d="M0 13h3v3H0zM13 2h3v3h-3z" fill="#c81818" /></> },
  { n: "平移", d: <><path d="M1 2h13v10H1z" fill="#e8edf4" stroke="#7c8ca8" /><path d="M7 9l3-2 1 2 3-1 1 4-2 4h-3z" fill="#f0c068" stroke="#a87820" strokeWidth=".8" /></> },
  { n: "旋转", d: <><path d="M3 11C0 5 6 0 11 3M13 5c3 6-3 11-8 8" stroke="#1c3c8c" strokeWidth="1.800" /><path d="M0 10l6 1-3 4zM16 6l-6-1 3-4z" fill="#1c3c8c" /></> },
  { n: "透视", on: true, d: <><path d="M1 10l6-4 4 1v3l-5 5-5-2z" fill="#4064d8" stroke="#1c2c80" strokeWidth=".8" /><path d="M1 10l5 1 5-4-4-1z" fill="#a4b8f4" /><path d="M12 2h4M14 0v4" stroke="#d01818" /></> },
  { n: "适合窗口", menu: true, d: <><path d="M1 1h14v14H1z" fill="#fff" stroke="#2038a8" strokeWidth="1.500" /><path d="M1 1h14v2.500H1z" fill="#2038a8" /><path d="M3.500 5.500h3v3h-3zM9.500 5.500h3v3h-3zM3.500 10.500h3v3h-3zM9.500 10.500h3v3h-3z" fill="#d84838" /></> },
  { n: "渲染样式", menu: true, d: <><path d="M2 9l6-7v7l7 1c0 3-3 5-7 5s-7-3-6-6z" fill="#b4b4b4" stroke="#222" strokeWidth="1.200" /><path d="M5 6v5l5 1M3 11q5 3 11 0" stroke="#222" /></> },
  { n: "材料球", menu: true, d: <><circle cx="8" cy="8" r="6.500" fill="#a8b050" stroke="#6c7440" /><circle cx="6" cy="5.500" r="3" fill="#f4f0b0" /><path d="M2 10c4 3 9 2 12-1 0 7-11 8-12 1z" fill="#6c9c78" /></> },
  { n: "定向视图", menu: true, d: <><path d="M0 1l4 4-4 4z" fill="#18a028" /><path d="M0 9l5 2-5 5z" fill="#d02020" /><path d="M5 8l4-5 7 4-5 7z" fill="#dfe6fa" stroke="#4458a8" /><path d="M10 4l1 9" stroke="#4458a8" /></> },
  { n: "剪切截面", d: <><path d="M1 4l5-3h3v10l-4 4H1z" fill="#fff" stroke="#1c2c90" strokeWidth="1.300" /><path d="M5 5l4-4v10l-4 4z" fill="#8498e4" stroke="#1c2c90" /><path d="M8 8h5M12 5l4 3-4 3z" fill="#1c2cc0" stroke="#1c2cc0" /></> },
  { n: "编辑截面", d: <><path d="M3 4l4-3h3v10l-4 4H3z" fill="#fff" stroke="#1c2c90" strokeWidth="1.300" /><path d="M6 5l4-4v10l-4 4z" fill="#8498e4" stroke="#1c2c90" /><path d="M9 8h4M12 5l4 3-4 3z" fill="#1c2cc0" stroke="#1c2cc0" /><path d="M0 3l4 3-4 3z" fill="#18a028" /><path d="M0 10l4 2-4 3z" fill="#d02020" /></> },
];

const ToolStrip = ({ items }: { items: ToolSpec[] }) => (
  <>
    {items.map((t) => (
      <React.Fragment key={t.n}>
        <Tool aria-label={t.n} $on={t.on} $mark={t.mark}><Icon>{t.d}</Icon></Tool>
        {t.menu && <ToolMenu aria-label={`${t.n}选项`}><Caret /></ToolMenu>}
      </React.Fragment>
    ))}
  </>
);

const SelectionTools = () => (
  <SelectionBar>
    <MenuButton>
      <Icon><path d="M1 2h12M3 5h11M3 8h8M3 11h7M5 14h7" stroke="#5068a8" strokeWidth="1.500" /><path d="M8 5l6 7H11l1 3-2 .5-1-3-2 2z" fill="#fff" stroke="#222" strokeWidth=".8" /></Icon>
      <span>菜单(<u>M</u>)</span>
      <Caret />
    </MenuButton>
    <BarRule $before={0} $after={11} />
    <Dropdown label="类型过滤器" value="没有选择过滤器" w={147} gap={10} />
    <Dropdown label="选择范围" value="仅在工作部件内" w={154} gap={3} />
    <ToolStrip items={SNAP_TOOLS} />
    <BarRule $before={5} $after={11} />
    <Dropdown label="工作图层" value="1" w={50} gap={5} />
    <ToolStrip items={VIEW_TOOLS} />
    <BarRule $before={7} $after={6} />
    <Tool aria-label="测量距离"><Icon><path d="M1 1v6M15 1v6" stroke="#c01818" strokeWidth="1.500" /><path d="M2 4h12" stroke="#1828a0" strokeWidth="1.500" /><path d="M5 2L2 4l3 2zM11 2l3 2-3 2z" fill="#1828a0" /><path d="M1 9h14v6H1z" fill="#f8e8b8" stroke="#a08038" /><path d="M4 9v3M7 9v3M10 9v3M13 9v3" stroke="#222" /></Icon></Tool>
    <BarRule $before={6} $after={0} />
    <Grow />
    <EndCaret><Caret /></EndCaret>
  </SelectionBar>
);

/* ---------- cue line ---------- */

const CueLine = styled.div`
  flex: none;
  display: grid;
  grid-template-columns: minmax(0, 911fr) minmax(0, 911fr) 20px 76px 2px;
  height: 22px;
  background: #d9d9d9;
  border-top: 1px solid #f6f6f6;
  border-bottom: 1px solid #a0a0a0;
`;
const CueCell = styled.div`
  display: flex;
  align-items: center;
  gap: 4px;
  padding-left: 2px;
  padding-bottom: 2px;
  border-right: 1px solid #aaa;
  box-shadow: inset -1px 0 #eee;
  font-size: 13px;
  font-weight: 700;
  line-height: 16px;
  white-space: nowrap;
`;

/* ---------- workspace ---------- */

const Workspace = styled.main`
  flex: 1;
  display: flex;
  min-height: 0;
`;
const ResourceBar = styled.nav`
  display: flex;
  flex-direction: column;
  align-items: flex-end;
  gap: 2px;
  width: 31px;
  background: linear-gradient(90deg, #a9a9a9, #b6b6b6);
`;
const GearButton = styled.button`
  display: flex;
  justify-content: center;
  width: 31px;
  height: 43px;
  padding-top: 7px;
`;
const ResourceTab = styled.button<{ $active?: boolean; $apart?: boolean }>`
  display: flex;
  align-items: center;
  justify-content: center;
  width: ${(p) => (p.$active ? 29 : 27)}px;
  height: 40px;
  margin-top: ${(p) => (p.$apart ? 12 : 0)}px;
  margin-right: ${(p) => (p.$active ? -1 : 0)}px;
  border: 1px solid #777;
  border-width: 1px 0 1px 1px;
  border-radius: 4px 0 0 4px;
  background: ${(p) => (p.$active ? "#ececec" : "linear-gradient(90deg, #e0e0e0, #d0d0d0)")};
  z-index: ${(p) => (p.$active ? 1 : 0)};
`;
const Navigator = styled.aside`
  display: flex;
  flex-direction: column;
  width: 306px;
  padding: 0 9px 5px 6px;
  border: 1px solid #777;
  border-top: 0;
  background: #ececec;
`;
const NavigatorHead = styled.div`
  display: flex;
  align-items: center;
  justify-content: space-between;
  height: 31px;
  padding: 0 5px 0 5px;
`;
const NavigatorTitle = styled.h2`
  margin: 0;
  font-size: 13px;
  line-height: 20px;
`;
const TreeFrame = styled.div`
  flex: 1;
  display: flex;
  flex-direction: column;
  min-height: 0;
  border: 2px solid #6c6c6c;
  border-width: 2px 1px 2px 2px;
  background: #fff;
`;
const TreeView = styled.div`
  flex: 1;
  min-height: 0;
  overflow: hidden;
`;
const TreeTable = styled.table`
  width: 100%;
  table-layout: fixed;
  border-collapse: separate;
  border-spacing: 0;
`;
const TreeHeadCell = styled.th<{ $w?: number }>`
  width: ${(p) => (p.$w ? `${p.$w}px` : "auto")};
  height: 19px;
  padding: 1px 5px 0;
  border-right: 1px solid #b8b8b8;
  border-bottom: 1px solid #8c8c8c;
  background: linear-gradient(#fafafa 40%, #d8d8d8);
  font-weight: 400;
  line-height: 17px;
  text-align: left;
`;
const SortMark = styled.span`
  display: inline-block;
  margin-left: 17px;
  margin-bottom: 2px;
  border: 5px solid transparent;
  border-top: 0;
  border-bottom: 6px solid #111;
`;
const TreeRow = styled.tr<{ $dim?: boolean; $bold?: boolean }>`
  color: ${(p) => (p.$dim ? "#9b9b9b" : "#2b2b2b")};
  font-weight: ${(p) => (p.$bold ? 700 : 400)};
  font-size: ${(p) => (p.$bold ? 13 : 12)}px;
  background: #fff;
  &:nth-child(even) { background: #f6f6f6; }
`;
const TreeCell = styled.td`
  height: 20px;
  padding: 0;
  border-right: 1px solid #e0e0e0;
  border-bottom: 1px solid #e3e3e3;
  overflow: hidden;
  white-space: nowrap;
  line-height: 18px;
  & + & { padding-left: 4px; border-right: 0; }
`;
const TreeLabel = styled.label`
  display: flex;
  align-items: center;
  gap: 2px;
  height: 19px;
`;
const DOTS_V = "repeating-linear-gradient(#999 0 1px, transparent 1px 2px)";
const DOTS_H = "repeating-linear-gradient(90deg, #999 0 1px, transparent 1px 2px)";
const Guide = styled.span<{ $deep?: boolean; $edge?: "first" | "last" }>`
  flex: none;
  display: flex;
  align-items: center;
  width: ${(p) => (p.$deep ? 38 : 17)}px;
  height: 20px;
  padding-left: 4px;
  background:
    ${DOTS_V} ${(p) => (p.$deep ? 28 : 8)}px ${(p) => (p.$edge === "first" ? "10px" : "0")} / 1px ${(p) => (p.$edge ? "10px" : "20px")} no-repeat,
    ${DOTS_H} ${(p) => (p.$deep ? 28 : 8)}px 10px / 9px 1px no-repeat;
`;
const Expander = styled.button`
  display: flex;
  align-items: center;
  justify-content: center;
  width: 9px;
  height: 9px;
  border: 1px solid #888;
  border-radius: 2px;
  background: #fff;
`;
const Check = styled.input`
  flex: none;
  appearance: none;
  width: 12px;
  height: 12px;
  margin: 0;
  border: 2px solid #111;
  border-width: 1px 1px 2px 2px;
  background: #fff;
  &:checked::before {
    content: "";
    display: block;
    width: 9px;
    height: 9px;
    background: #18a818;
    clip-path: polygon(0 45%, 22% 30%, 38% 58%, 82% 0, 100% 12%, 42% 100%, 28% 100%);
  }
`;
const ScrollRow = styled.div`
  display: flex;
  align-items: center;
  height: 17px;
  padding: 0 7px 1px 6px;
  background: #f0f0f0;
`;
const ScrollThumb = styled.div`
  display: flex;
  align-items: center;
  justify-content: center;
  width: 58px;
  height: 15px;
  margin-left: 7px;
  border: 1px solid #888;
  border-radius: 2px;
  background: linear-gradient(#f6f6f6, #e6e6e6 50%, #ccc);
`;
const Splitter = styled.div`
  display: grid;
  grid-template-columns: 113fr 53px 113fr;
  gap: 4px;
  align-items: center;
  height: 12px;
  &::before, &::after { content: ""; height: 2px; background: linear-gradient(#999 50%, #fff 50%); }
`;
const SplitterGrip = styled.span`
  height: 6px;
  border: 1px solid #aaa;
  border-color: #fff #999 #999 #fff;
  background: #d6d6d6;
`;
const Fold = styled.button`
  flex: none;
  display: flex;
  align-items: stretch;
  height: 23px;
  border: 1px solid #999;
  border-width: 0 1px 1px 0;
  background: linear-gradient(#fafafa, #ececec 50%, #dcdcdc 51%, #d0d0d0);
  font-size: 13px;
  font-weight: 700;
  line-height: 22px;
  text-align: left;
  padding-left: 6px;
`;
const FoldArrow = styled.span`
  display: flex;
  align-items: center;
  justify-content: center;
  width: 23px;
  border-left: 1px solid #999;
  box-shadow: inset 1px 0 #fff;
`;

const Folder = ({ mark }: { mark?: boolean }) => (
  <Icon>
    <path d="M1 14V5h4l1 2h7v2" fill="#fbd878" stroke="#a87810" />
    <path d="M1 14l3-5h11.500l-3 5z" fill="#f4b830" stroke="#8a6008" />
    {mark && <path d="M9 1.500h7M9 3.500h7" stroke="#223" />}
  </Icon>
);
const Clock = ({ w = 16 }: { w?: number }) => (
  <Icon w={w} vb="0 0 24 24">
    <circle cx="12" cy="12" r="11" fill="#7c8490" /><circle cx="12" cy="12" r="8.500" fill="#e6effa" stroke="#4c5460" />
    <path d="M12 5v7h5.500" stroke="#111" strokeWidth="2" />
    <path d="M12 4v1.500M12 18.500V20M4 12h1.500M18.500 12H20" stroke="#333" />
  </Icon>
);
const Extrude = () => (
  <Icon><path d="M1 4c2-3 4-1 7-2s5-1 7 0v10c-1 3-3 1-5 2s-2 1-4 0-4 0-5 0z" fill="#f8a430" stroke="#a85008" /><path d="M5 3v10M9.500 4v10M13 3v9" stroke="#b85c08" /><path d="M5.500 4c1-1 3 0 3.500 0v9c-1-1-2 0-3.500 0z" fill="#ffe0a0" /></Icon>
);
const Blend = () => (
  <Icon><path d="M1 7l6-5 8 0v8l-5 5-9-2z" fill="#4c6cd8" stroke="#2a3a80" strokeWidth=".8" /><path d="M1 12V8c1-3 3-2 6-6h8c-3 3-5 2-5 8v4z" fill="#f4f0ec" stroke="#444" strokeWidth=".7" /><path d="M10 14v-4c0-4 3-4 5-7v7z" fill="#4c6cd8" /><path d="M1 9c1-4 3-3 6-4l4 1c-2 1-2 2-2 4z" fill="#f49838" /></Icon>
);
const Hole = () => <Icon><path d="M4 1v10l3.500 4 3.500-4V1" fill="#fff" stroke="#111" strokeWidth="1.300" /><path d="M4 11h7" stroke="#111" /></Icon>;
const Pad = () => (
  <Icon><path d="M1 5l5-3 8 0v9l-5 4-8-2z" fill="#5878dc" stroke="#2a3a80" strokeWidth=".8" /><path d="M1 5l8 1 5-4H6z" fill="#b8c8f8" /><path d="M2 7l5 1v4l-5-1z" fill="#e85030" stroke="#8a2010" strokeWidth=".7" /></Icon>
);
const Datum = () => (
  <Icon><path d="M3 2v9l9 2M3 6l6 7V7z" stroke="#222" strokeWidth="1.200" /><path d="M3 8l11-4" stroke="#222" strokeWidth="1.200" /><path d="M11 4l4-2-1 4z" fill="#18902c" /><path d="M9 12l5 2-4 2z" fill="#c82020" /><path d="M0 3l2-3 3 3z" fill="#2038c0" /></Icon>
);
const Sketch = () => (
  <Icon><path d="M1.500 1.500h5v5h-5zM1.500 9.500h4v5h-4zM8.500 9.500h6v5h-6z" fill="#fff" stroke="#111" strokeWidth="1.300" /><path d="M9 7l5-6 2 2-5 5z" fill="#f0b030" stroke="#704808" strokeWidth=".8" /></Icon>
);

type Node = {
  label: string; type?: string; icon: React.ReactNode; deep?: boolean; expand?: "+" | "-";
  edge?: "first" | "last"; dim?: boolean; bold?: boolean;
};
const TREE: Node[] = [
  { label: "历史记录模式", icon: <Clock />, edge: "first" },
  { label: "模型视图", expand: "+", icon: <Icon><path d="M1 4l6-3 6 3v7l-6 3-6-3zM1 4l6 3 6-3M7 7v7M7 1v6l-6 4M7 7l6 4" stroke="#188850" strokeWidth="1.200" /><path d="M10 12l6 1-5 3z" fill="#e05020" /></Icon> },
  { label: "摄像机", expand: "+", icon: <><Icon><path d="M1 8l3-1.500 2 3L13 2l2 1-8.500 12H5z" fill="#18a830" /></Icon><Icon w={15}><path d="M1 5l9-4 3 2v9l-6 3-6-1z" fill="#f4d8d0" stroke="#c02c20" strokeWidth="1.500" /><circle cx="8" cy="7" r="3.500" fill="#6070b8" stroke="#222" /><circle cx="8" cy="7" r="1.200" fill="#fff" /><path d="M10 10l5-2v5l-4 2z" fill="#333" /></Icon></> },
  { label: "用户表达式", icon: <Folder mark /> },
  { label: "模型历史记录", expand: "-", icon: <Folder />, edge: "last" },
  { label: "基准坐标系 (0)", type: "DATUM_CSYS", icon: <Datum />, deep: true, dim: true },
  { label: "草图 (1) \"SKETCH_0...", type: "SKETCH", icon: <Sketch />, deep: true, dim: true },
  { label: "拉伸 (2)", type: "EXTRUDE", icon: <Extrude />, deep: true },
  { label: "拉伸 (3)", type: "EXTRUDE", icon: <Extrude />, deep: true },
  { label: "边倒圆 (4)", type: "BLEND", icon: <Blend />, deep: true },
  { label: "边倒圆 (5)", type: "BLEND", icon: <Blend />, deep: true },
  { label: "简单孔 (6)", type: "SIMPLE HOLE", icon: <Hole />, deep: true },
  { label: "矩形垫块 (7)", type: "RECTANGULAR_PAD", icon: <Pad />, deep: true },
  { label: "拉伸 (8)", type: "EXTRUDE", icon: <Extrude />, deep: true },
  { label: "简单孔 (9)", type: "SIMPLE HOLE", icon: <Hole />, deep: true, bold: true, edge: "last" },
];
const EMPTY_ROWS = Array.from({ length: 40 }, (_, i) => i);

const V24 = "0 0 24 24";
const RESOURCE_TABS: { n: string; d: React.ReactNode; active?: boolean; apart?: boolean }[] = [
  { n: "装配导航器", d: <><path d="M1 3l4-2 4 2v3l4 1v4l-5 2-7-2z" fill="#f4c040" stroke="#a87810" /><path d="M1 3l4 1.500L9 3M5 4.500V12M8 8l5-1" stroke="#a87810" /><path d="M14 17l5-2 4 2v4l-4 2-5-1z" fill="#f8c848" stroke="#a87810" /><path d="M4 14v10M4 19h6M14 12h9" stroke="#1c2c80" strokeWidth="1.500" /></> },
  { n: "约束导航器", d: <><path d="M3 1l8 5-8 5zM21 1l-8 5 8 5z" fill="#1c24a8" /><path d="M12 0v24" stroke="#111" strokeDasharray="4 2" /><path d="M1 14h9v8H1z" fill="#ffe020" stroke="#222" /><path d="M14 14v9h9z" fill="#d02818" stroke="#600" /></> },
  { n: "部件导航器", active: true, d: <><path d="M2 3c2-2 7-2 9 0v7c-2 2-7 2-9 0z" fill="#e878a8" stroke="#982060" /><ellipse cx="6.500" cy="3" rx="4.500" ry="1.700" fill="#fbd0e0" stroke="#982060" /><path d="M5 13v10M5 18h6M13 9h9" stroke="#3c2c70" strokeWidth="1.500" /><circle cx="17" cy="18" r="4.500" stroke="#982060" strokeWidth="1.500" /><circle cx="17" cy="18" r="1.500" stroke="#982060" /></> },
  { n: "重用库", d: <><path d="M1 6l5-4 3 1-2 3v16l-6 1z" fill="#f08c28" stroke="#8a4808" /><path d="M7 6l5-4 3 1-1 3v15l-7 1z" fill="#38b040" stroke="#186020" /><path d="M14 6l5-4 4 1v15l-5 4h-4z" fill="#3c94e0" stroke="#184c80" /><path d="M18 6v15M14 6h4l5-3M1 6h5M7 6h6" stroke="#184c80" strokeWidth=".8" /><path d="M3 8v12M10 8v12M16 8v12" stroke="#fff" /></> },
  { n: "HD3D 工具", apart: true, d: <><path d="M10 6c6-1 9 3 9 8M11 2c8-1 12 5 12 11" stroke="#3c68c8" strokeWidth="2" /><circle cx="9" cy="15" r="8" fill="#2c84d8" stroke="#184c98" /><path d="M9 10v2M7 14h2.500v6M7 20h5" stroke="#fff" strokeWidth="2" /></> },
  { n: "Web 浏览器", apart: true, d: <><path d="M3 1h12l6 6v16H3z" fill="#f4f8ff" stroke="#4464a8" strokeWidth="1.500" /><path d="M15 1v6h6" stroke="#4464a8" /><circle cx="12" cy="15" r="5.500" fill="#3c8cd0" stroke="#184c80" /><path d="M8 14c2-4 5-2 6-3 2 4-1 5-2 8-2-1-2-3-4-5z" fill="#48a848" /></> },
  { n: "历史记录", apart: true, d: null },
  { n: "系统材料", d: <><path d="M2 1h8v4H2z" fill="#e83020" /><path d="M2 5h8v4H2z" fill="#f8c820" /><path d="M2 9h8v5H2z" fill="#48e020" /><path d="M2 14h8v4H2z" fill="#20d8e8" /><path d="M2 18h8v5H2z" fill="#1838c8" /><path d="M11 7l9 14" stroke="#111" strokeWidth="3" /><path d="M10 1l1 4 4 0-3 2 1 4-3-3-3 2 1-3-3-2 4 0z" fill="#fff" /></> },
  { n: "Process Studio", d: <><path d="M3 3h6v16H3z" fill="#3c94d8" stroke="#184c80" /><path d="M1 21h9" stroke="#c8a838" strokeWidth="2" /><path d="M9 8h14l-5 4H9z" fill="#b8d0f0" stroke="#3c68a8" /><path d="M12 8l9 13" stroke="#111" strokeWidth="3" /><path d="M11 2l1 4 3 0-3 2 1 3-3-2-3 1 2-3-3-2 4 0z" fill="#fff" /></> },
  { n: "角色", d: <><circle cx="17" cy="6" r="5" fill="#f0b878" stroke="#a87010" /><path d="M12 5c0-6 10-6 10 0z" fill="#d8981c" /><path d="M11 19c0-9 13-9 13 0z" fill="#289040" /><circle cx="7" cy="12" r="5" fill="#f0b890" stroke="#684828" strokeWidth="1.500" /><path d="M1 13c0-9 12-9 12 0l-3-3H4z" fill="#5c4428" /><path d="M0 24c0-8 14-8 14 0z" fill="#8848c0" /></> },
  { n: "系统场景", d: <><path d="M1 4l5-3v19l-5 3z" fill="#f4f4f4" stroke="#666" /><path d="M8 2h15v17H8z" fill="#fff" stroke="#555" /><path d="M10 4h11v10H10z" fill="#3c84d8" /><path d="M10 4h3v10h-3zM18 4h3v10h-3z" fill="#c82828" /><path d="M13 10l3-3 2 3v4h-5z" fill="#fff" /></> },
];

const ResourceTabs = () => (
  <ResourceBar aria-label="资源条">
    <GearButton aria-label="资源条选项">
      <Icon w={15}><circle cx="8" cy="8" r="5" stroke="#222" strokeWidth="1.500" /><circle cx="8" cy="8" r="1.200" fill="#222" /><path d="M8 0v3M8 13v3M0 8h3M13 8h3M2.500 2.500l2 2M11.500 11.500l2 2M2.500 13.500l2-2M11.500 4.500l2-2" stroke="#222" strokeWidth="1.500" /></Icon>
    </GearButton>
    {RESOURCE_TABS.map((t) => (
      <ResourceTab key={t.n} aria-label={t.n} $active={t.active} $apart={t.apart}>
        {t.d ? <Icon w={22} vb={V24}>{t.d}</Icon> : <Clock w={22} />}
      </ResourceTab>
    ))}
  </ResourceBar>
);

const PartNavigator = () => (
  <Navigator>
    <NavigatorHead>
      <NavigatorTitle>部件导航器</NavigatorTitle>
      <button aria-label="最大化"><Icon w={13}><path d="M1 1h14v14H1z" stroke="#111" strokeWidth="1.800" /></Icon></button>
    </NavigatorHead>
    <TreeFrame>
      <TreeView>
        <TreeTable>
          <thead>
            <tr>
              <TreeHeadCell $w={200}>名称<SortMark /></TreeHeadCell>
              <TreeHeadCell>特征类型</TreeHeadCell>
            </tr>
          </thead>
          <tbody>
            {TREE.map((n) => (
              <TreeRow key={n.label} $dim={n.dim} $bold={n.bold}>
                <TreeCell>
                  <TreeLabel>
                    <Guide $deep={n.deep} $edge={n.edge}>
                      {n.expand && (
                        <Expander aria-label="展开">
                          <Icon w={7} vb="0 0 7 7"><path d={n.expand === "+" ? "M1 3.500h5M3.500 1v5" : "M1 3.500h5"} stroke="#222" /></Icon>
                        </Expander>
                      )}
                    </Guide>
                    {n.deep && <Check type="checkbox" defaultChecked />}
                    {n.icon}
                    {n.label}
                  </TreeLabel>
                </TreeCell>
                <TreeCell>{n.type}</TreeCell>
              </TreeRow>
            ))}
            {EMPTY_ROWS.map((i) => (
              <TreeRow key={i}><TreeCell /><TreeCell /></TreeRow>
            ))}
          </tbody>
        </TreeTable>
      </TreeView>
      <ScrollRow>
        <Icon w={5} h={8} vb="0 0 5 8"><path d="M5 0v8L0 4z" fill="#222" /></Icon>
        <ScrollThumb><Icon w={8} vb="0 0 8 8"><path d="M1 0v8M4 0v8M7 0v8" stroke="#555" /></Icon></ScrollThumb>
        <Grow />
        <Icon w={5} h={8} vb="0 0 5 8"><path d="M0 0v8l5-4z" fill="#222" /></Icon>
      </ScrollRow>
    </TreeFrame>
    <Splitter><SplitterGrip /></Splitter>
    {["相依性", "细节", "预览"].map((t) => (
      <Fold key={t}>
        <Grow>{t}</Grow>
        <FoldArrow><Icon w={13} h={10} vb="0 0 13 10"><path d="M0 0h3l3.500 5L10 0h3L8 9.500H5z" fill="#555" /></Icon></FoldArrow>
      </Fold>
    ))}
  </Navigator>
);

/* ---------- viewport ---------- */

const Viewport = styled.section`
  position: relative;
  flex: 1;
  min-width: 0;
  overflow: hidden;
  background: linear-gradient(#b0b1b3, #b6b7b9 20%, #d3d4d6 60%, #f1f1f3);
`;
const ModelLayer = styled.div`
  position: absolute;
  left: 393px;
  top: 183px;
`;
const TriadLayer = styled.div`
  position: absolute;
  left: 45px;
  bottom: 30px;
`;

const Edge = styled.path.attrs({ vectorEffect: "non-scaling-stroke" })`
  stroke: #3a2600;
  stroke-width: 1;
  fill: none;
`;
const Face = styled.path.attrs({ vectorEffect: "non-scaling-stroke" })`
  stroke: #3a2600;
  stroke-width: 1;
`;
const Fade = ({ id, stops, v }: { id: string; stops: [number, string][]; v?: boolean }) => (
  <linearGradient id={id} x1="0" y1="0" x2={v ? "0" : "1"} y2={v ? "1" : "0"}>
    {stops.map(([o, c]) => <stop key={o} offset={o} stopColor={c} />)}
  </linearGradient>
);

const Model = () => (
  <svg width="740" height="520" viewBox="0 0 1568 1560" preserveAspectRatio="none" role="img" aria-label="端盖">
    <defs>
      <linearGradient id="rim" gradientUnits="userSpaceOnUse" x1="100" y1="1250" x2="1250" y2="250">
        <stop offset="0" stopColor="#ffe600" /><stop offset=".3" stopColor="#ffc400" /><stop offset=".65" stopColor="#eeaa00" /><stop offset="1" stopColor="#d09200" />
      </linearGradient>
      <linearGradient id="floor" gradientUnits="userSpaceOnUse" x1="180" y1="1200" x2="1200" y2="300">
        <stop offset="0" stopColor="#ffe200" /><stop offset=".35" stopColor="#ffbe00" /><stop offset=".65" stopColor="#eaa800" /><stop offset="1" stopColor="#dc9e00" />
      </linearGradient>
      <Fade id="front" v stops={[[0, "#d68200"], [0.5, "#cc7900"], [1, "#b87000"]]} />
      <linearGradient id="cornerL" gradientUnits="userSpaceOnUse" x1="130" y1="1400" x2="270" y2="1370">
        <stop offset="0" stopColor="#2a1800" /><stop offset=".2" stopColor="#6c4000" /><stop offset=".5" stopColor="#b06800" /><stop offset=".8" stopColor="#cc7a00" /><stop offset="1" stopColor="#c07400" />
      </linearGradient>
      <Fade id="cornerR" stops={[[0, "#d08000"], [0.3, "#dc8600"], [0.65, "#b06a00"], [1, "#4a2c00"]]} />
      <Fade id="back" stops={[[0, "#ee8c00"], [1, "#f49600"]]} />
      <linearGradient id="cylTL" gradientUnits="userSpaceOnUse" x1="112" y1="660" x2="162" y2="645">
        <stop offset="0" stopColor="#3a2200" /><stop offset=".35" stopColor="#a06000" /><stop offset=".75" stopColor="#ff9c00" /><stop offset="1" stopColor="#ee9000" />
      </linearGradient>
      <Fade id="cylTR" stops={[[0, "#e08600"], [0.35, "#f09200"], [0.7, "#9a5c00"], [1, "#3c2400"]]} />
      <Fade id="holeWall" stops={[[0, "#3c2400"], [0.12, "#a06000"], [0.35, "#ee9000"], [0.5, "#b87000"], [0.72, "#cc7c00"], [0.9, "#6a4000"], [1, "#1c1000"]]} />
      <Fade id="smallHole" stops={[[0, "#3c2400"], [0.25, "#b06a00"], [0.5, "#dc8600"], [0.75, "#a86400"], [1, "#2c1a00"]]} />
      <Fade id="bossInL" stops={[[0, "#302000"], [0.3, "#5c3800"], [0.6, "#d07c00"], [0.8, "#f09200"], [1, "#d88200"]]} />
      <Fade id="bossInR" stops={[[0, "#d07e00"], [0.3, "#a86400"], [0.5, "#a06000"], [0.85, "#5a3600"], [1, "#281800"]]} />
      <linearGradient id="bossOutL" gradientUnits="userSpaceOnUse" x1="365" y1="500" x2="610" y2="450">
        <stop offset="0" stopColor="#281800" /><stop offset=".3" stopColor="#7a4a00" /><stop offset=".6" stopColor="#a06000" /><stop offset=".8" stopColor="#b06c00" /><stop offset="1" stopColor="#dc8600" />
      </linearGradient>
      <linearGradient id="bossOutR" gradientUnits="userSpaceOnUse" x1="710" y1="440" x2="905" y2="390">
        <stop offset="0" stopColor="#dc8600" /><stop offset=".3" stopColor="#dc8600" /><stop offset=".7" stopColor="#6a4000" /><stop offset=".85" stopColor="#3a2400" /><stop offset="1" stopColor="#6c4200" />
      </linearGradient>
      <linearGradient id="glint" gradientUnits="userSpaceOnUse" x1="150" y1="930" x2="190" y2="1170">
        <stop offset="0" stopColor="#1c1000" /><stop offset=".25" stopColor="#a86400" /><stop offset=".45" stopColor="#3a2200" /><stop offset=".65" stopColor="#b46c00" /><stop offset="1" stopColor="#1c1000" />
      </linearGradient>
    </defs>

    <Face fill="url(#cornerL)" d="M97 1215C98 1245 120 1285 218 1269L302 1506C270 1525 225 1530 200 1500C192 1488 190 1480 187 1468L112 1262Z" />
    <Face fill="url(#cornerR)" d="M1473 604C1515 580 1528 550 1526 530L1532 800C1530 830 1515 850 1481 866Z" />
    <Face fill="url(#front)" d="M218 1269L1473 604L1481 866L302 1506Z" />
    <Face fill="url(#rim)" d="M52 618C55 585 80 550 135 526L1085 68C1125 52 1175 55 1192 82L1500 470C1540 520 1530 570 1473 604L218 1269C170 1290 125 1285 108 1255C98 1240 97 1220 95 1195Z" />

    <Face fill="url(#floor)" d="M154 765C155 745 165 725 185 717L1086 272C1105 265 1120 265 1131 270L1157 261L1388 588L203 1211Z" />
    <Face fill="url(#back)" d="M138 565L1070 112L1086 272L185 717Z" />
    <Face fill="url(#cylTL)" d="M100 612C102 590 115 572 138 565L185 717C165 725 155 745 154 765Z" />
    <Face fill="#1c1000" d="M100 612L154 765L203 1211C175 1218 160 1205 158 1180Z" />
    <path fill="url(#glint)" d="M137 930L172 930L197 1165L158 1165Z" />
    <Face fill="url(#cylTR)" d="M1070 112C1085 103 1105 103 1118 108L1131 270C1120 265 1105 265 1086 272Z" />
    <Face fill="#f09000" d="M1118 108L1141 96L1157 261L1131 270Z" />
    <Face fill="#181000" d="M1141 96L1464 519C1445 524 1437 528 1436 540C1436 560 1425 575 1388 588L1157 261Z" />

    <Edge d="M780 422L968 810M895 675L961 815" />
    <path d="M578 521L583 521L719 942L714 942Z" fill="#2a1a00" />

    <Face fill="url(#holeWall)" d="M840 530C835 450 910 395 990 393C1060 393 1090 430 1086 480C1080 545 1010 598 935 598C890 598 842 580 840 530Z" />
    <Face fill="#cbccce" d="M855 560C870 500 930 458 1000 457C1045 457 1075 470 1083 498C1070 555 1000 598 935 598C890 598 865 585 855 560Z" />
    <Face fill="url(#holeWall)" d="M968 808C945 780 944 750 948 725C960 650 1040 600 1110 600C1170 602 1210 635 1216 679Z" />
    <Face fill="#d0d1d3" d="M958 790C975 725 1040 668 1110 668C1150 668 1180 680 1195 692L968 808Z" />
    <Face fill="url(#smallHole)" d="M744 692C745 660 775 634 808 633C835 634 848 648 848 668C845 700 815 726 782 725C758 724 744 712 744 692Z" />

    <g transform="translate(21.200 540) scale(.7063 1)">
      <Face fill="url(#bossOutL)" d="M330 385C380 440 480 450 592 430L636 532L458 598C430 590 400 560 392 535Z" />
      <Face fill="url(#bossOutR)" d="M690 392C800 330 860 260 862 170L915 320C925 370 915 410 906 432L725 495Z" />
      <Face fill="url(#bossInL)" d="M508 150C430 180 370 240 367 305C367 350 400 390 468 400C490 365 520 340 570 316Z" />
      <Face fill="url(#bossInR)" d="M592 118C700 95 795 120 808 190C812 225 800 255 773 285C740 275 700 275 652 284Z" />
      <Face fill="#ffc000" d="M500 122C390 160 310 240 312 330C318 420 420 460 592 430L585 394C460 420 370 380 367 305C370 240 430 180 508 150Z" />
      <Face fill="#f8b600" d="M582 92C700 60 800 80 840 130C895 200 850 300 690 392L676 360C770 310 815 240 808 190C795 120 700 95 592 118Z" />
      <Edge d="M500 122L570 316M582 92L652 284M676 360L725 495M585 394L636 532" />
      <path d="M584 394L588 394L638 530L634 532Z" fill="#3a2600" />
    </g>
  </svg>
);

const Triad = () => (
  <svg width="84" height="92" viewBox="0 -6 84 92" role="img" aria-label="XYZ">
    <path d="M21 25l23-9 13 35-24 8-13-15z" fill="#cfcfcf" opacity=".8" stroke="#999" />
    <path d="M44 16l-3 23 16 12M41 39l-20 8" stroke="#aaa" fill="none" />
    <path d="M24 45l28-9" stroke="#a4d0ac" strokeWidth="4" />
    <path d="M51 32l13 1-11 7z" fill="#289038" />
    <path d="M20 44L15 18" stroke="#0c30a0" strokeWidth="4" />
    <path d="M13 9l-3 11 8-1z" fill="#0c30a0" />
    <path d="M22 47l10 15" stroke="#cc3838" strokeWidth="4" />
    <path d="M36 70l-8-8 7-4z" fill="#c03030" />
    <circle cx="20" cy="46" r="4" fill="#d8d8d8" stroke="#999" />
    <text x="8" y="10" fontSize="12" fill="#2048d8">Z</text>
    <text x="65" y="33" fontSize="12" fill="#289038">Y</text>
    <text x="33" y="79" fontSize="12" fill="#d83030">X</text>
  </svg>
);

/* ---------- sketch tools rail ---------- */

const SketchRail = styled.nav`
  display: flex;
  flex-direction: column;
  align-items: center;
  width: 34px;
  padding-top: 8px;
  border-left: 1px solid #f4f4f4;
  border-right: 1px solid #aaa;
  background: linear-gradient(#e3e3e3, #dcdcdc 42%, #cbcbcb);
`;
const SketchTool = styled.button<{ $h?: number }>`
  display: flex;
  align-items: center;
  justify-content: center;
  width: 30px;
  height: ${(p) => p.$h ?? 33}px;
`;
const RailEnd = styled.span`
  width: 24px;
  height: 2px;
  margin-top: 7px;
  background: #f4f4f4;
`;
const RailArrow = styled.span`
  margin: auto 12px 6px 0;
`;
const Dot = ({ x, y, c = "#d02818" }: { x: number; y: number; c?: string }) => <circle cx={x} cy={y} r="2" fill={c} stroke="#701008" strokeWidth=".5" />;
const Profile = <><circle cx="7" cy="5" r="5.500" stroke="#111" strokeWidth="1.200" /><circle cx="7" cy="5" r=".8" fill="#111" /><path d="M10 19L20 8" stroke="#111" strokeWidth="1.200" /><Dot x={10} y={19} /><Dot x={20} y={8} /></>;
const SKETCH_TOOLS: [string, React.ReactNode][] = [
  ["轮廓", Profile],
  ["直线", <><path d="M3 19L19 4" stroke="#111" strokeWidth="1.200" /><Dot x={3} y={19} /><Dot x={19} y={4} /></>],
  ["椭圆", <><ellipse cx="11" cy="10" rx="10" ry="7" stroke="#111" strokeWidth="1.200" /><path d="M11 6.500l1 2.500 2.500 1-2.500 1-1 2.500-1-2.500-2.500-1 2.500-1z" fill="#d02818" stroke="#d02818" /></>],
  ["矩形", <><path d="M2 4h18v12H2z" stroke="#111" strokeWidth="1.200" /><Dot x={2} y={4} /><Dot x={20} y={16} /></>],
  ["倒角", <><path d="M0 1h10M21 12v9" stroke="#111" strokeWidth="1.200" /><path d="M8 1h4l9 9v3" stroke="#e02818" strokeWidth="1.200" /><path d="M13 1h8v8" stroke="#555" strokeDasharray="1.500 1.500" /></>],
  ["多边形", <><path d="M6 2h10l5 9-5 9H6l-5-9z" stroke="#111" strokeWidth="1.200" /><Dot x={11} y={11} /></>],
  ["圆弧", <><path d="M3 2c9 0 17 5 18 16" stroke="#111" strokeWidth="1.200" /><Dot x={3} y={2} /><Dot x={15} y={6} /><Dot x={20} y={18} /></>],
  ["样条", <><path d="M2 12l5-9 3 8M8 10l6 10 6-11" stroke="#888" /><path d="M2 11c7-6 9 8 18-1" stroke="#c02818" strokeWidth="1.200" /><Dot x={7} y={9} /><Dot x={15} y={14} /><Dot x={2} y={12} c="#888" /><Dot x={7} y={3} c="#888" /><Dot x={14} y={19} c="#888" /><Dot x={20} y={9} c="#888" /></>],
];

const SketchTools = () => (
  <SketchRail aria-label="草图">
    <SketchTool aria-label="点"><Icon w={18} vb="0 0 18 18"><path d="M9 0v18M0 9h18" stroke="#111" strokeWidth="1.500" /></Icon></SketchTool>
    <SketchTool $h={11} aria-label="点选项"><Caret /></SketchTool>
    {SKETCH_TOOLS.map(([n, d]) => (
      <SketchTool key={n} aria-label={n}><Icon w={22} vb="0 0 22 22">{d}</Icon></SketchTool>
    ))}
    <SketchTool $h={28} aria-label="更多曲线"><Icon w={22} vb="0 0 22 22">{Profile}</Icon></SketchTool>
    <SketchTool $h={11} aria-label="曲线选项"><Caret /></SketchTool>
    <RailEnd />
    <RailArrow><Icon w={4} h={6} vb="0 0 4 6"><path d="M4 0v6L0 3z" fill="#111" /></Icon></RailArrow>
  </SketchRail>
);

/* ---------- taskbar ---------- */

const Taskbar = styled.footer`
  flex: none;
  display: flex;
  align-items: center;
  height: 41px;
  padding-bottom: 1px;
  border-top: 1px solid #3a5068;
  box-shadow: inset 0 1px #c8dcf0;
  background: linear-gradient(90deg, #7f93ab, #8297b0 60px, #a5bfdd 120px, #a5bfdd calc(100% - 370px), #7f93ab calc(100% - 310px), #7f93ab);
`;
const StartButton = styled.button`
  width: 61px;
  padding-left: 9px;
`;
const PinnedButton = styled.button`
  width: 60px;
  padding-left: 11px;
`;
const TaskButton = styled.button<{ $active?: boolean }>`
  display: flex;
  align-items: center;
  justify-content: center;
  width: 59px;
  height: 39px;
  margin-right: 3px;
  border: 1px solid #3c5470;
  border-radius: 3px;
  box-shadow: inset 0 0 0 1px #dfeaf6;
  background: ${(p) =>
    p.$active
      ? "linear-gradient(135deg, #f6f9fd, #dfe8f4 50%, #e6eef8)"
      : "linear-gradient(135deg, #cfdced, #a9bfdc 50%, #b8cce6)"};
`;
const Tray = styled.div`
  display: flex;
  align-items: center;
  gap: 8px;
  height: 39px;
  padding-top: 2px;
  color: #fff;
`;
const TrayGap = styled.span<{ $w: number }>`
  width: ${(p) => p.$w}px;
`;
const ClockText = styled.div`
  width: 84px;
  padding-left: 7px;
  color: #fff;
  line-height: 18px;
  text-align: center;
`;
const ShowDesktop = styled.button`
  width: 14px;
  height: 39px;
  border: 1px solid #4c5c70;
  background: linear-gradient(135deg, #9cb0c8, #5c6c80 50%, #8094ac);
`;

const DesktopBar = () => (
  <Taskbar>
    <StartButton aria-label="开始">
      <Icon w={36} vb="0 0 36 36">
        <defs><radialGradient id="orb" cx=".5" cy=".75"><stop offset="0" stopColor="#50c8f0" /><stop offset=".6" stopColor="#2068a8" /><stop offset="1" stopColor="#204060" /></radialGradient></defs>
        <circle cx="18" cy="18" r="17" fill="url(#orb)" stroke="#9cc0dc" />
        <path d="M5 11a15 13 0 0 1 26 0q-12 6-26 0z" fill="#c0d8ec" opacity=".5" />
        <path d="M10 11q4-3 8-1l-2 8q-4-2-8 0z" fill="#e85420" /><path d="M19 11q4 2 9 0l-2 8q-5 2-9 0z" fill="#8cc838" />
        <path d="M8 19q4-2 8 0l-2 8q-4-2-8 0z" fill="#4ca0e4" /><path d="M17 20q4 2 9 0l-2 7q-5 2-9 0z" fill="#f8c828" />
      </Icon>
    </StartButton>
    <PinnedButton aria-label="画图">
      <Icon w={34} h={34} vb="0 0 34 34">
        <path d="M2 22C0 12 12 5 21 8s9 12 3 13-2 4-4 7-16 5-18-6z" fill="#d0e8f8" stroke="#7ca8cc" />
        <circle cx="7" cy="19" r="2.800" fill="#d84838" /><circle cx="12" cy="14" r="2.800" fill="#58b848" /><circle cx="19" cy="13" r="2.800" fill="#f0c030" /><circle cx="14" cy="22" r="2.500" fill="#68a0d8" />
        <path d="M27 8l-10 24" stroke="#d88c3c" strokeWidth="3" /><path d="M24 4l5-3 4 4-5 6z" fill="#a87850" />
      </Icon>
    </PinnedButton>
    <TaskButton aria-label="Excel">
      <Icon w={30} vb="0 0 30 30">
        <path d="M16 4h13v22H16z" fill="#fff" stroke="#207245" /><path d="M18 8h9M18 12h9M18 16h9M18 20h9M22.500 5v20" stroke="#207245" strokeWidth="1.500" />
        <path d="M0 3l18-3v30L0 27z" fill="#207245" /><text x="9" y="20" fontSize="15" fontWeight="700" fill="#fff" textAnchor="middle">X</text>
      </Icon>
    </TaskButton>
    <TaskButton aria-label="AutoCAD">
      <Icon w={32} vb={V32}>
        <path d="M0 0h32v32H0z" fill="#e86458" /><path d="M0 0h32v12Q16 14 0 20z" fill="#f8ccc4" />
        <path d="M16 4l11 21-5 3-3-5h-6l-3 5-5-3z" fill="#b81818" /><path d="M16 4l1 14-7 10-5-3z" fill="#8c0c10" /><path d="M14 18l2-4 2 4z" fill="#e04040" />
      </Icon>
    </TaskButton>
    <TaskButton $active aria-label="NX 10"><NxLogo w={32} /></TaskButton>
    <TaskButton aria-label="浏览器">
      <Icon w={32} vb={V32}>
        <circle cx="15" cy="17" r="13.500" fill="#fff" stroke="#68c828" strokeWidth="1.500" />
        <path d="M5 19c0-14 21-14 21-1H12c1 5 7 5 9 2h5c-4 10-21 9-21-1z" fill="#54b820" /><path d="M12 14h8c-1-4-7-4-8 0z" fill="#fff" />
        <path d="M2 29C0 18 16 2 29 3 18 6 8 16 5 27z" fill="#7cd838" />
      </Icon>
    </TaskButton>
    <TaskButton aria-label="绿色应用">
      <Icon w={32} vb={V32}>
        <rect width="32" height="32" rx="3" fill="#2c2c2c" /><path d="M10 5h10l-3 8-5 5-8-1z" fill="#18e828" /><path d="M10 5h10l-7 4z" fill="#0cb41c" /><path d="M4 17l8 1 6 7H9z" fill="#0cc41c" /><path d="M20 5l2 8-4 12-6-7 5-5z" fill="#10a81c" /><path d="M22 14l6 11H18z" fill="#18d828" />
      </Icon>
    </TaskButton>
    <Grow />
    <Tray>
      <span>CH</span>
      <Icon><path d="M1 6h14v8H1z" fill="#c8ccd0" stroke="#777" /><path d="M3 8h10M3 10h10M5 12h6" stroke="#777" strokeDasharray="1 1" /><path d="M8 6c0-3 4-1 4-5" stroke="#888" /></Icon>
      <TrayGap $w={24} />
      <Icon w={17}><path d="M5 4l5-3 5 2v7l-5 4-5-2z" fill="#f0f0f0" stroke="#111" /><path d="M5 6l6 2 4-3M8 3l4 1" stroke="#111" /><path d="M0 15l7-5 2 2-3 4z" fill="#48c048" stroke="#111" /><path d="M0 15l5-3v3z" fill="#d040c0" /></Icon>
      <TrayGap $w={15} />
      <Icon><path d="M0 0h16v16H0z" fill="#1468c0" /><path d="M2 6c3-3 4 1 6 0M7 13c4 1 5-1 5-9M9 5l3-3 3 3" stroke="#fff" strokeWidth="1.800" /></Icon>
      <Icon><circle cx="8" cy="8" r="7.500" fill="#8c8c8c" stroke="#ccc" /><path d="M11 6a4 4 0 1 0 0 5M8 8h4" stroke="#fff" strokeWidth="1.800" /></Icon>
      <Icon><path d="M4 5h11v7H4zM7 15h6M9.500 12v3" stroke="#fff" strokeWidth="1.500" /><path d="M1 1v4h4V1M3 5v10" stroke="#fff" strokeWidth="1.300" /></Icon>
      <Icon><path d="M1 6h3l4-4v12l-4-4H1z" fill="#fff" /><path d="M10 5q2 3 0 6M12 3q4 5 0 10M14.500 2q4 6 0 12" stroke="#fff" strokeWidth="1.200" /></Icon>
    </Tray>
    <ClockText><div>14:15</div><div>2019/5/11</div></ClockText>
    <ShowDesktop aria-label="显示桌面" />
  </Taskbar>
);

/* ---------- overlays ---------- */

const Watermark = styled.div`
  position: absolute;
  right: 24px;
  bottom: 14px;
  display: flex;
  align-items: center;
  gap: 9px;
  color: rgba(255, 255, 255, 0.6);
  white-space: nowrap;
  pointer-events: none;
`;
const WatermarkName = styled.div`
  font: 700 42px/48px "Noto Sans CJK SC", sans-serif;
`;
const WatermarkSite = styled.div`
  font: 400 17px/18px "DejaVu Sans", sans-serif;
  padding-bottom: 2px;
`;
const Thermometer = styled.div`
  position: absolute;
  right: 0;
  bottom: 118px;
`;

export default function App() {
  return (
    <Page>
      <GlobalStyle />
      <Header>
        <TitleBar />
        <MenuTabs />
      </Header>
      <RibbonBar />
      <SelectionTools />
      <CueLine>
        <CueCell>选择对象并使用 MB3，或者双击某一对象</CueCell>
        <CueCell />
        <CueCell />
        <CueCell>
          <Icon><path d="M0 0h16v16H0z" fill="#7c8c94" /><path d="M3 4l9-1-2 6-6 1zM5 9l1 5" fill="#666" stroke="#555" /></Icon>
          <FullScreen c="#666" />
        </CueCell>
      </CueLine>
      <Workspace>
        <ResourceTabs />
        <PartNavigator />
        <Viewport>
          <ModelLayer><Model /></ModelLayer>
          <TriadLayer><Triad /></TriadLayer>
        </Viewport>
        <SketchTools />
      </Workspace>
      <DesktopBar />
      <Thermometer>
        <Icon w={13} h={56} vb="0 0 13 56">
          <rect x="3.500" y="1" width="6" height="46" rx="3" fill="#5c6c78" stroke="#3a4a54" />
          <path d="M6.500 18v30" stroke="#48b8e0" strokeWidth="3" /><circle cx="6.500" cy="49" r="5.500" fill="#48b8e0" stroke="#3a5a70" strokeWidth="1.500" />
        </Icon>
      </Thermometer>
      <Watermark>
        <svg width="72" height="82" viewBox="0 0 72 82" aria-hidden="true" opacity=".75">
          <path d="M36 0l36 20v42L36 82 0 62V20z" fill="#58b8e8" opacity=".85" />
          <path d="M36 0l15 9c6 12 6 24 4 32L36 20 14 14z" fill="#b8e0f6" />
          <path d="M0 20l14-7c8-1 16 1 22 7L16 32C6 40 3 50 1 60z" fill="#8cd0f2" />
          <path d="M0 62l16-12 20 12 20-10c-8 10-16 14-34 14L36 82z" fill="#3898d0" />
          <path d="M36 20l19 11v21L36 63 17 52V31z" fill="#58b4e4" stroke="#fff" strokeWidth="3" />
          <path d="M20 32l16 9 16-9M36 41v20" stroke="#fff" strokeWidth="1" fill="none" />
        </svg>
        <div>
          <WatermarkName>3D世界网</WatermarkName>
          <WatermarkSite>WWW.3DSJW.COM</WatermarkSite>
        </div>
      </Watermark>
    </Page>
  );
}
